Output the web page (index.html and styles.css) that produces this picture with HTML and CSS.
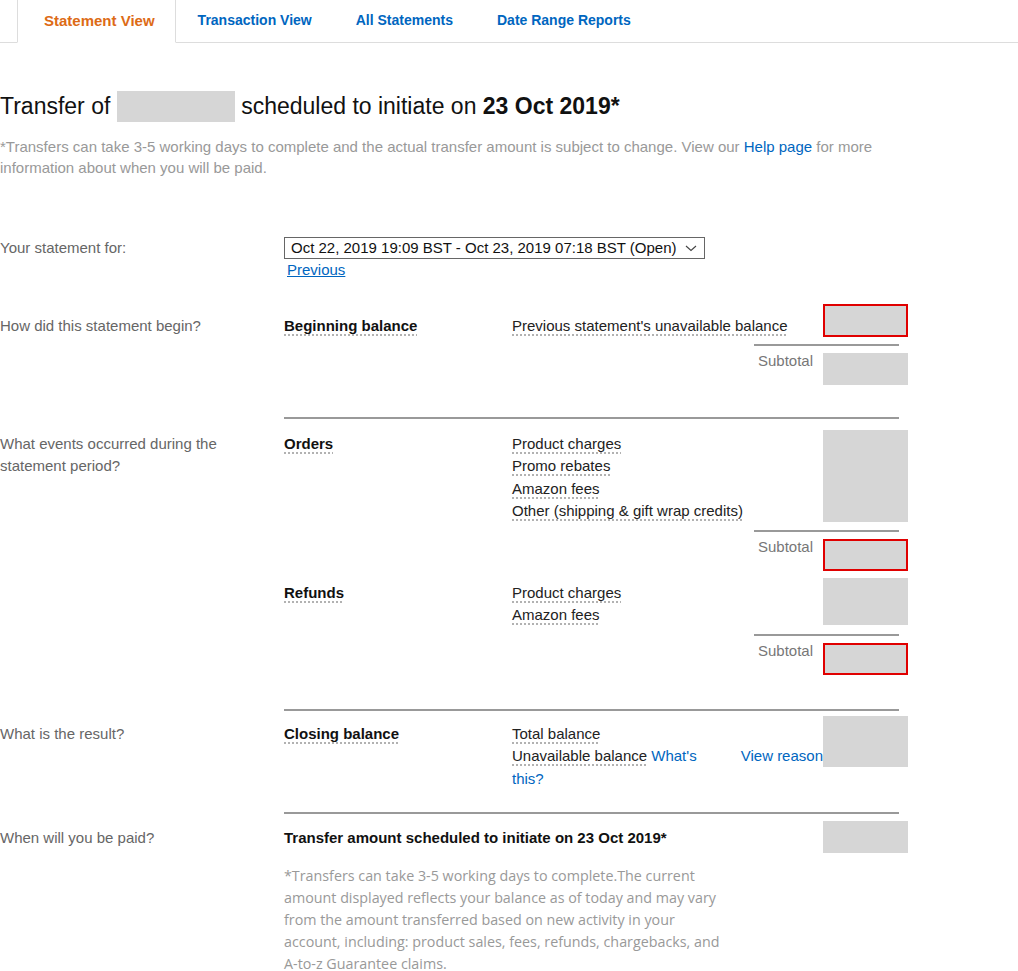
FILE: index.html
```html
<!DOCTYPE html>
<html lang="en">
  <head>
    <meta charset="UTF-8" />
    <meta name="viewport" content="width=device-width, initial-scale=1.0" />
    <title>Payments - Statement View</title>
    <link rel="stylesheet" href="styles.css">
  </head>
  <body>
    <div class="tabs">
      <span class="tab_edge"></span>
      <a class="tab active" href="#">Statement View</a>
      <a class="tab" href="#">Transaction View</a>
      <a class="tab" href="#">All Statements</a>
      <a class="tab" href="#">Date Range Reports</a>
      <span class="tab_fill"></span>
    </div>

    <div class="content">
      <h1>Transfer of <span class="masked"></span> scheduled to initiate on <b>23 Oct 2019*</b></h1>
      <p class="note">
        *Transfers can take 3-5 working days to complete and the actual transfer amount is subject to change. View our
        <a href="#">Help page</a> for more information about when you will be paid.
      </p>

      <div class="period">
        <div class="question">Your statement for:</div>
        <div>
          <div class="select">
            <span>Oct 22, 2019 19:09 BST - Oct 23, 2019 07:18 BST (Open)</span>
            <svg width="12" height="8" viewBox="0 0 12 8">
              <polyline points="1,2 6,6.5 11,2" fill="none" stroke="#444" stroke-width="1.1" />
            </svg>
          </div>
          <a class="prev" href="#">Previous</a>
        </div>
      </div>

      <!-- how did it begin -->
      <div class="row row_begin">
        <div class="question cell">How did this statement begin?</div>
        <div class="head cell"><span class="term">Beginning balance</span></div>
        <ul class="items cell">
          <li><span class="term">Previous statement's unavailable balance</span></li>
        </ul>
        <div class="amount flag"></div>
      </div>
      <div class="subtotal">
        <hr />
        <div class="sub_line">
          <span class="sub_label">Subtotal</span>
          <div class="amount"></div>
        </div>
      </div>

      <hr class="rule rule_events" />

      <!-- events -->
      <div class="row row_orders">
        <div class="question cell">What events occurred during the statement period?</div>
        <div class="head cell"><span class="term">Orders</span></div>
        <ul class="items cell">
          <li><span class="term">Product charges</span></li>
          <li><span class="term">Promo rebates</span></li>
          <li><span class="term">Amazon fees</span></li>
          <li><span class="term">Other (shipping &amp; gift wrap credits)</span></li>
        </ul>
        <div class="amount"></div>
      </div>
      <div class="subtotal">
        <hr />
        <div class="sub_line">
          <span class="sub_label">Subtotal</span>
          <div class="amount flag"></div>
        </div>
      </div>

      <div class="row row_refunds">
        <div></div>
        <div class="head cell"><span class="term">Refunds</span></div>
        <ul class="items cell">
          <li><span class="term">Product charges</span></li>
          <li><span class="term">Amazon fees</span></li>
        </ul>
        <div class="amount"></div>
      </div>
      <div class="subtotal">
        <hr />
        <div class="sub_line">
          <span class="sub_label">Subtotal</span>
          <div class="amount flag"></div>
        </div>
      </div>

      <hr class="rule rule_result" />

      <!-- result -->
      <div class="row row_result">
        <div class="question cell">What is the result?</div>
        <div class="head cell"><span class="term">Closing balance</span></div>
        <div class="result_items cell">
          <ul class="items">
            <li><span class="term">Total balance</span></li>
            <li><span class="term">Unavailable balance</span> <a href="#">What's this?</a></li>
          </ul>
          <a class="reason" href="#">View reason</a>
        </div>
        <div class="amount"></div>
      </div>

      <hr class="rule rule_paid" />

      <!-- paid -->
      <div class="row row_paid">
        <div class="question cell">When will you be paid?</div>
        <div class="paid_title cell">Transfer amount scheduled to initiate on 23 Oct 2019*</div>
        <div class="amount"></div>
        <p class="paid_note">
          *Transfers can take 3-5 working days to complete.The current amount displayed reflects your balance as of
          today and may vary from the amount transferred based on new activity in your account, including: product
          sales, fees, refunds, chargebacks, and A-to-z Guarantee claims.
        </p>
      </div>
    </div>
  </body>
</html>
```

FILE: styles.css
```css
* {
  box-sizing: border-box;
}
body {
  margin: 0;
  font-family: "Liberation Sans", Arial, sans-serif;
  font-size: 15px;
  color: #111;
  background: #fff;
}
a {
  color: #0066c0;
  text-decoration: none;
}

/* tabs */
.tabs {
  display: flex;
  height: 43px;
}
.tab,
.tab_edge,
.tab_fill {
  border-bottom: 1px solid #ddd;
}
.tab_edge {
  width: 17px;
}
.tab_fill {
  flex: 1;
}
.tab {
  padding: 12px 22px 0;
  font-size: 14px;
  font-weight: bold;
  line-height: 17px;
}
.tab.active {
  color: #dd6b16;
  font-size: 15px;
  border-left: 1px solid #ddd;
  border-right: 1px solid #ddd;
  border-bottom-color: #fff;
  padding: 12px 20px 0 26px;
}

/* heading */
h1 {
  margin: 48px 0 0;
  font-size: 23px;
  font-weight: normal;
  line-height: 31px;
}
.masked {
  display: inline-block;
  width: 118px;
  height: 31px;
  background: #d6d6d6;
  vertical-align: top;
}
.note {
  margin: 14px 0 0;
  max-width: 900px;
  color: #999;
  line-height: 21px;
}

.question {
  color: #666;
  line-height: 22px;
}

/* statement period */
.period {
  display: grid;
  grid-template-columns: 284px auto;
  margin-top: 59px;
}
.select {
  width: 421px;
  height: 22px;
  border: 1px solid #666;
  display: flex;
  align-items: center;
  justify-content: space-between;
  padding: 0 7px 0 6px;
  line-height: 20px;
}
.prev {
  display: inline-block;
  margin-left: 3px;
  line-height: 22px;
  text-decoration: underline;
}

/* statement rows */
.row {
  display: grid;
  grid-template-columns: 284px 228px 311px 85px;
  align-items: start;
}
.cell {
  line-height: 22.5px;
}
.head {
  font-weight: bold;
}
.items {
  list-style: none;
  margin: 0;
  padding-left: 0;
  color: #222;
}
.term {
  text-decoration: underline dotted #999;
  text-underline-offset: 4px;
}

.amount {
  height: 32px;
  background: #d6d6d6;
}
.amount.flag {
  border: 2px solid #e00000;
}

.row_begin {
  margin-top: 23px;
}
.row_begin .cell {
  padding-top: 10.5px;
}
.row_begin .amount {
  height: 33px;
}

.row_orders {
  margin-top: 11px;
}
.row_orders .cell {
  padding-top: 2.5px;
}
.row_orders .amount {
  height: 92px;
}

.row_refunds {
  margin-top: 7px;
}
.row_refunds .cell {
  padding-top: 4px;
}
.row_refunds .amount {
  height: 47px;
}

.row_result {
  margin-top: 5px;
}
.row_result .cell {
  padding-top: 7px;
}
.row_result .amount {
  height: 51px;
}
.result_items {
  display: flex;
  justify-content: space-between;
}
.result_items .items {
  width: 200px;
}
.reason {
  margin-top: 22.5px;
}

.row_paid {
  margin-top: 7px;
}
.row_paid .cell {
  padding-top: 6px;
}
.paid_title {
  grid-column: 2 / 4;
  font-weight: bold;
}
.paid_note {
  grid-column: 2 / 4;
  margin: 12px 0 0;
  max-width: 445px;
  font-family: "Open Sans", sans-serif;
  font-size: 14.3px;
  line-height: 22px;
  color: #999;
}

/* subtotals and rules */
.subtotal {
  margin: 7px 0 0 512px;
  width: 396px;
  display: flex;
  flex-direction: column;
  align-items: flex-end;
}
.subtotal hr {
  width: 145px;
  height: 2px;
  margin: 0 9px 0 0;
  border: 0;
  background: #999;
}
.sub_line {
  display: flex;
  gap: 10px;
  margin-top: 7px;
}
.sub_label {
  color: #777;
  line-height: 16px;
}
.sub_line .amount {
  width: 85px;
}

.rule {
  width: 615px;
  height: 2px;
  margin: 0 0 0 284px;
  border: 0;
  background: #999;
}
.rule_events {
  margin-top: 32px;
}
.rule_result {
  margin-top: 34px;
}
.rule_paid {
  margin-top: 22px;
}
```
